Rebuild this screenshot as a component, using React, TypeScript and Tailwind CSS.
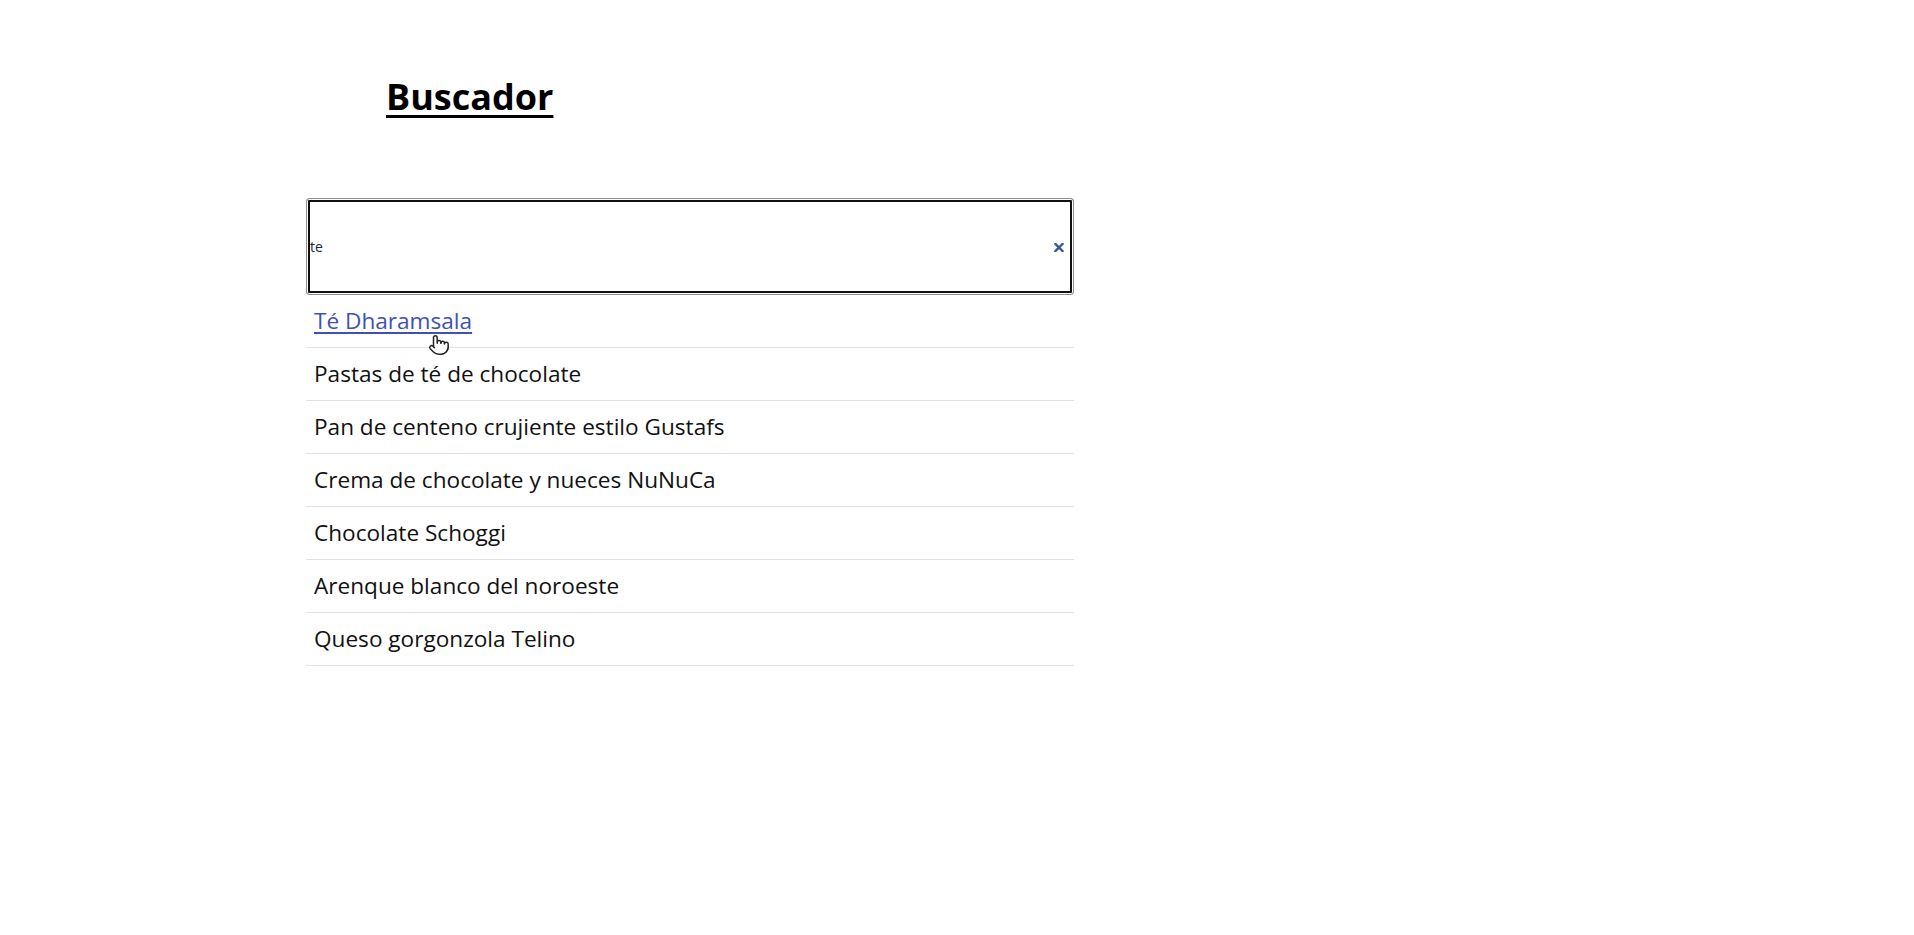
import { Pointer } from "lucide-react";

const productos = [
  "Té Dharamsala",
  "Pastas de té de chocolate",
  "Pan de centeno crujiente estilo Gustafs",
  "Crema de chocolate y nueces NuNuCa",
  "Chocolate Schoggi",
  "Arenque blanco del noroeste",
  "Queso gorgonzola Telino",
];

export default function App() {
  return (
    <div className="relative min-h-[935px] bg-white pl-[306px] pt-[79px] font-['Open_Sans',sans-serif] text-[#111]">
      <h1 className="ml-[80px] text-[36px] font-bold leading-none text-black underline decoration-[3px] underline-offset-[5px]">
        Buscador
      </h1>

      <div className="mt-[83px] w-[768px]">
        <div className="relative h-[97px] rounded-[3px] border border-[#8d8d8d] shadow-[inset_0_0_0_1px_#fff,inset_0_0_0_3px_#101010]">
          <input
            readOnly
            value="te"
            className="h-full w-full bg-transparent pl-[3px] text-[14px] text-[#1b2540] outline-none"
          />
          <button className="absolute right-[9px] top-[43px] flex h-[10px] w-[10px] items-center justify-center">
            <svg width="10" height="9" viewBox="0 0 10 9">
              <path d="M1.5 1 L8.5 8 M8.5 1 L1.5 8" stroke="#35589b" strokeWidth="2.4" strokeLinecap="square" />
            </svg>
          </button>
        </div>

        <ul>
          {productos.map((p, i) => (
            <li key={p} className="flex h-[53px] items-center border-b border-[#e1e1e4] pl-[8px] text-[22.6px]">
              {i === 0 ? (
                <a href="#" className="text-[#3f51b5] underline decoration-[2px] underline-offset-[3px]">
                  {p}
                </a>
              ) : (
                <span>{p}</span>
              )}
            </li>
          ))}
        </ul>
      </div>

      <Pointer
        size={22}
        strokeWidth={1.6}
        className="absolute left-[428px] top-[334px] fill-white text-[#222]"
      />
    </div>
  );
}
